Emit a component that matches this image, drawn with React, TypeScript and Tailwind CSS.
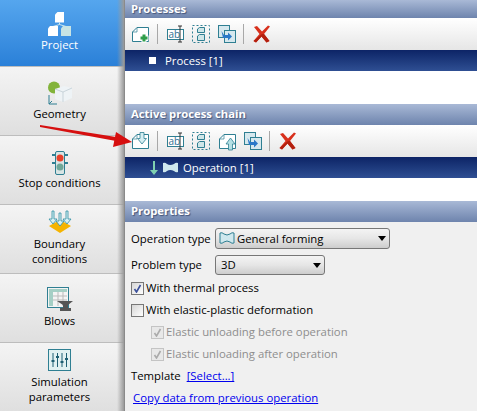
const font = "font-['Open_Sans','Noto_Sans',sans-serif]";
const teal = "#2f7f92";

function SideButton({ label, icon, active, h }: { label: string; icon: React.ReactNode; active?: boolean; h: string }) {
  return (
    <div
      className={`${h} flex flex-col items-center shrink-0 pr-[5px] text-center leading-[15px] ${
        active
          ? "bg-gradient-to-b from-[#55a6ee] to-[#2a80d8] text-white"
          : "bg-gradient-to-b from-[#f4f4f4] to-[#dfdfdf] text-black border-t border-[#bdbdbd]"
      }`}
    >
      {icon}
      <span className="whitespace-pre-line">{label}</span>
    </div>
  );
}

function Header({ title, h }: { title: string; h: string }) {
  return (
    <div className={`${h} shrink-0 pl-[6px] flex items-center font-bold text-white text-[11.3px] bg-gradient-to-b from-[#a9b9d6] to-[#6e84ad] [text-shadow:1px_1px_1px_#44557a]`}>
      {title}
    </div>
  );
}

function Toolbar({ children }: { children: React.ReactNode }) {
  return (
    <div className="h-[32px] shrink-0 flex items-center pl-[7px] bg-gradient-to-b from-white to-[#e6e6e6]">
      {children}
    </div>
  );
}

function Sep({ m }: { m: string }) {
  return <div className={`w-px h-[20px] bg-[#a8a8a8] ${m}`} />;
}

function Del({ m }: { m: string }) {
  return (
    <svg className={m} width="18" height="18" viewBox="0 0 18 18">
      <path d="M1 2 L4 1 L9 6.5 L15 0.5 L17 1.5 L11 9 L16.5 16 L13.5 17.5 L8.5 11.5 L3 17.5 L0.5 16 L6.5 9Z" fill="#d8301c" />
      <path d="M3 17.5 L8.5 11.5 L13.5 17.5 L16.5 16 L11 9 L9 9 L0.5 16Z" fill="#b3200f" />
    </svg>
  );
}

// sheet with a folded top-left corner, with an arrow or a plus on it
function Doc({ plus, down, up }: { plus?: boolean; down?: boolean; up?: boolean }) {
  return (
    <svg width="18" height="20" viewBox="0 0 18 20" fill="none">
      <path d="M0.5 8 L5 3.5 H16.5 V17.5 H0.5Z" fill="#fff" stroke={teal} />
      <path d="M0.5 8H5V3.5" stroke={teal} strokeWidth=".7" />
      {plus && (
        <>
          <path d="M12 9.5v9M7.5 14h9" stroke="#fff" strokeWidth="5" />
          <path d="M12 10.5v7M8.5 14h7" stroke="#2f9e4a" strokeWidth="3" />
        </>
      )}
      {down && <path d="M8 1.5v6H5.5L10 13l4.5-5.5H12v-6z" fill="#d5eef2" stroke={teal} strokeWidth=".8" />}
      {up && <path d="M9.5 19v-6H7l4.5-6 4.5 6h-2.500v6z" fill="#b5e0e4" stroke={teal} strokeWidth=".8" />}
    </svg>
  );
}

function Rename({ m }: { m: string }) {
  return (
    <svg className={m} width="18" height="20" viewBox="0 0 18 20" fill="none">
      <rect x="0.5" y="5.5" width="16" height="10" fill="#fff" stroke={teal} />
      <path d="M11 2h2M15 2h-2M11 18h4M13 2v16" stroke="#333" />
      <text x="1.5" y="13.5" fontSize="10" fill="#2f6f92" fontFamily="Open Sans">ab</text>
    </svg>
  );
}

function Dashed({ m }: { m: string }) {
  return (
    <svg className={m} width="18" height="20" viewBox="0 0 18 20" fill="none">
      <rect x="0.5" y="1.5" width="17" height="17" stroke={teal} strokeDasharray="2 2" />
      <path d="M5.5 5 L7.5 3.500 H12.500 V8.500 H5.500Z" fill="#cfe6e8" stroke={teal} />
      <path d="M5.5 12 L7.5 10.500 H12.500 V16.500 H5.500Z" fill="#cfe6e8" stroke={teal} />
    </svg>
  );
}

function Copy({ m }: { m: string }) {
  return (
    <svg className={m} width="18" height="20" viewBox="0 0 18 20" fill="none">
      <rect x="0.5" y="1.5" width="11" height="12" fill="#d6e8ee" stroke={teal} />
      <rect x="6.5" y="6.5" width="11" height="12" fill="#d6e8ee" stroke={teal} />
      <path d="M3.5 7l2.500 4h4V8.500l4 4-4 4V14H5z" fill="#2a78c8" />
    </svg>
  );
}

function Combo({ w, h, children }: { w: string; h: string; children: React.ReactNode }) {
  return (
    <div className={`${w} ${h} rounded-[3px] border border-[#777] bg-gradient-to-b from-[#f4f4f4] via-[#e6e6e6] to-[#cdcdcd] flex items-center justify-between pr-[3px]`}>
      <div className="flex items-center">{children}</div>
      <div className="w-0 h-0 border-x-[4px] border-x-transparent border-t-[5px] border-t-black" />
    </div>
  );
}

function Check({ label, checked, disabled, indent }: { label: string; checked?: boolean; disabled?: boolean; indent?: boolean }) {
  return (
    <div className={`h-[22px] flex items-center gap-[2px] ${indent ? "pl-[20px]" : ""} ${disabled ? "text-[#8e8e8e]" : ""}`}>
      <div className={`w-[13px] h-[13px] border flex items-center justify-center ${disabled ? "border-[#c4c4c4] bg-[#e8e8e8]" : "border-[#777] bg-gradient-to-br from-[#d6d6d6] to-white"}`}>
        {checked && (
          <svg width="9" height="9" viewBox="0 0 9 9" fill="none">
            <path d="M1.5 5 L3.5 8 L7.5 1" stroke={disabled ? "#aaa" : "#3a4f9a"} strokeWidth="1.6" />
          </svg>
        )}
      </div>
      <span>{label}</span>
    </div>
  );
}

export default function App() {
  return (
    <div className={`w-[477px] h-[411px] overflow-hidden flex bg-white text-[11.35px] relative ${font}`}>
      <div className="w-[125px] shrink-0 flex flex-col relative border-r border-[#8a8a8a]">
        <SideButton active h="h-[66px]" label="Project" icon={
          <svg className="mt-[11px] mb-[1px]" width="25" height="25" viewBox="0 0 25 25" fill="none">
            <path d="M10.500 1 L8 3.500V11.500H17V1Z" fill="#fff" />
            <path d="M12.500 11.500v2M6 15.500l6.500-2 6.500 2" stroke="#cfeaf0" />
            <path d="M3 15 L1 17.500V25H11V15Z" fill="#fff" />
            <path d="M16 15 L14 17.500V25H24V15Z" fill="#c8e4e4" />
          </svg>
        } />
        <SideButton h="h-[69px]" label="Geometry" icon={
          <svg className="mt-[14px] mb-[1px]" width="26" height="24" viewBox="0 0 26 24" fill="none">
            <circle cx="7" cy="6.500" r="6" fill="#82b33a" />
            <path d="M8 8l9-3 8 2v10l-9 4-8-3z" fill="#eef3f6" />
            <path d="M8 8l8 3 9-4M16 11v10" stroke="#b9c7cf" strokeWidth=".7" />
            <path d="M2 14v9h8M2 23l3-3" stroke={teal} />
          </svg>
        } />
        <SideButton h="h-[69px]" label="Stop conditions" icon={
          <svg className="mt-[15px]" width="18" height="24" viewBox="0 0 18 24" fill="none">
            <rect x="4.500" y="0.500" width="9" height="23" rx="1.500" fill="#d8e4e4" stroke={teal} />
            <path d="M1 4h3M14 4h3M1 12h3M14 12h3" stroke={teal} strokeWidth="2" />
            <circle cx="9" cy="7" r="3.500" fill="#e8402a" />
            <circle cx="9" cy="16" r="3.500" fill="#6fa798" />
          </svg>
        } />
        <SideButton h="h-[69px]" label={"Boundary\nconditions"} icon={
          <svg className="mt-[5px] mb-[2px]" width="24" height="24" viewBox="0 0 24 24" fill="none">
            <path d="M1 16 12 10 23 16 12 23Z" fill="#f5b400" />
            <path d="M4 1v8H1l4 5 4-5H6V1zM11 3v8H8l4 5 4-5h-3V3zM18 1v8h-3l4 5 4-5h-3V1z" fill="#d8f0f4" stroke="#2f8fa2" strokeWidth=".8" />
          </svg>
        } />
        <SideButton h="h-[69px]" label="Blows" icon={
          <svg className="mt-[13px] mb-[1px]" width="26" height="25" viewBox="0 0 26 25" fill="none">
            <rect x="0.500" y="0.500" width="21" height="20" fill="#f4f4f4" stroke={teal} />
            <path d="M2 2h18v3H2zM2 5h4v14H2z" fill="#a5cfc5" />
            <path d="M6 9h14M6 13h14M11 5v14M16 5v14" stroke="#bbb" />
            <path d="M10 14h16l-5 4v3h3v3H13v-3h3v-3z" fill="#555" />
          </svg>
        } />
        <SideButton h="h-[69px]" label={"Simulation\nparameters"} icon={
          <svg className="mt-[6px] mb-[3px]" width="23" height="22" viewBox="0 0 23 22" fill="none">
            <rect x="0.500" y="0.500" width="22" height="21" fill="#e2f1f1" stroke={teal} />
            <path d="M5 4v14M9.500 4v14M14 4v14M18.500 4v14" stroke="#1f5f72" />
            <path d="M3.500 12h3M8 8h3M12.500 13h3M17 10h3" stroke="#1f5f72" strokeWidth="2" />
          </svg>
        } />
        <div className="absolute right-0 top-0 bottom-0 w-[7px] bg-gradient-to-r from-transparent to-[#9a9a9a]" />
      </div>

      <div className="flex-1 flex flex-col min-w-0">
        <Header h="h-[18px]" title="Processes" />
        <Toolbar>
          <Doc plus />
          <Sep m="ml-[7px]" />
          <Rename m="ml-[9px]" />
          <Dashed m="ml-[7px]" />
          <Copy m="ml-[8px]" />
          <Sep m="ml-[7px]" />
          <Del m="ml-[9px]" />
        </Toolbar>
        <div className="h-[21px] shrink-0 flex items-center pl-[24px] gap-[9px] text-white bg-gradient-to-b from-[#0d2466] to-[#2f4f93]">
          <div className="w-[7px] h-[7px] bg-white" />
          <span>Process [1]</span>
        </div>
        <div className="h-[33px] shrink-0 bg-white" />
        <Header h="h-[21px]" title="Active process chain" />
        <Toolbar>
          <Doc down />
          <Sep m="ml-[7px]" />
          <Rename m="ml-[9px]" />
          <Dashed m="ml-[7px]" />
          <div className="ml-[9px] flex"><Doc up /></div>
          <Copy m="ml-[7px]" />
          <Sep m="ml-[7px]" />
          <Del m="ml-[9px]" />
        </Toolbar>
        <div className="h-[21px] shrink-0 flex items-center pl-[25px] text-white bg-gradient-to-b from-[#0d2466] to-[#2f4f93]">
          <svg width="8" height="14" viewBox="0 0 8 14"><path d="M3 0h2v9h3l-4 5-4-5h3z" fill="#7fd0b0" /></svg>
          <svg className="ml-[5px] mr-[5px]" width="15" height="11" viewBox="0 0 15 11"><path d="M0 1q2-1 4 1 3 2 7 0 2-2 4-1v9q-2 1-4-1-4-2-7 0-2 2-4 1z" fill="#cfe8ee" /></svg>
          <span>Operation [1]</span>
        </div>
        <div className="h-[23px] shrink-0 bg-white" />
        <Header h="h-[21px]" title="Properties" />
        <div className="flex-1 bg-[#f0f0f0] pl-[6px] pt-[6px] text-black">
          <div className="flex items-center">
            <span className="w-[84px] whitespace-nowrap">Operation type</span>
            <Combo w="w-[175px]" h="h-[21px]">
              <svg className="ml-[3px] mr-[2px]" width="16" height="12" viewBox="0 0 16 12" fill="none"><path d="M1 1q2-1 4 1 3 2 6 0 2-2 4-1v10q-2 1-4-1-3-2-6 0-2 2-4 1z" fill="#cfe8ee" stroke={teal} /></svg>
              General forming
            </Combo>
          </div>
          <div className="flex items-center mt-[6px] mb-[2px]">
            <span className="w-[84px]">Problem type</span>
            <Combo w="w-[110px]" h="h-[20px]"><span className="pl-[5px]">3D</span></Combo>
          </div>
          <Check label="With thermal process" checked />
          <Check label="With elastic-plastic deformation" />
          <Check label="Elastic unloading before operation" checked disabled indent />
          <Check label="Elastic unloading after operation" checked disabled indent />
          <div className="h-[22px] flex items-center gap-[6px]">
            <span>Template</span>
            <span className="text-[#0000ee] underline">[Select...]</span>
          </div>
          <div className="h-[22px] flex items-center pl-[2px] text-[#0000ee] underline">Copy data from previous operation</div>
        </div>
      </div>

      {/* callout arrow */}
      <svg className="absolute left-[38px] top-[122px]" width="96" height="28" viewBox="0 0 96 28">
        <path d="M2 3 L2 5 L78 19 L78 15Z" fill="#d60f0f" />
        <path d="M94 20 L78 10 L75 25Z" fill="#d60f0f" />
      </svg>
    </div>
  );
}
